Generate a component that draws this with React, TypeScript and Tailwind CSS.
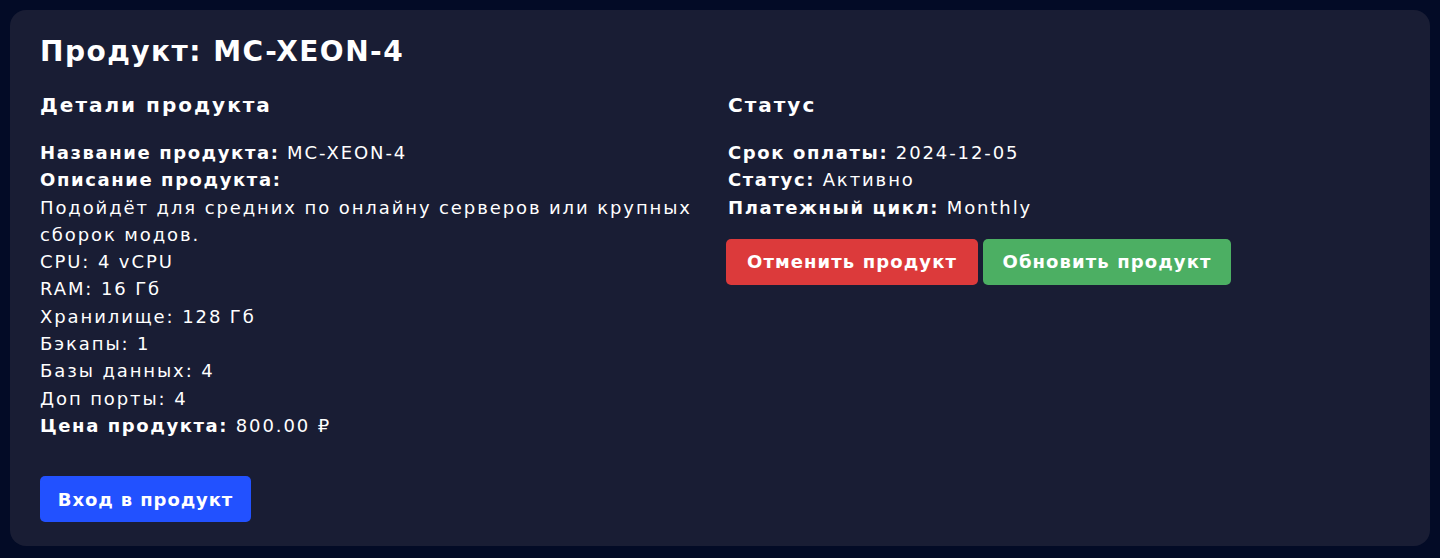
export default function App() {
  const font = { fontFamily: '"DejaVu Sans", "Noto Sans", sans-serif' };
  return (
    <div className="min-h-[558px] bg-[#030b26] p-[10px] text-white" style={font}>
      <div className="rounded-2xl bg-[#191d34] px-[30px] pt-[22px] pb-[24px]">
        <h1 className="text-[28px] font-bold leading-[40px] tracking-[1.5px]">Продукт: MC-XEON-4</h1>
        <div className="mt-[19px] grid grid-cols-2 gap-4">
          <div>
            <h2 className="text-[20px] font-bold leading-[28px] tracking-[2px]">Детали продукта</h2>
            <div className="mt-[20px] text-[18px] leading-[27.3px] tracking-[1.9px]">
              <p><b className="tracking-[1.6px]">Название продукта:</b> MC-XEON-4</p>
              <p><b className="tracking-[1.6px]">Описание продукта:</b></p>
              <p>Подойдёт для средних по онлайну серверов или крупных сборок модов.</p>
              <p>CPU: 4 vCPU</p>
              <p>RAM: 16 Гб</p>
              <p>Хранилище: 128 Гб</p>
              <p>Бэкапы: 1</p>
              <p>Базы данных: 4</p>
              <p>Доп порты: 4</p>
              <p><b className="tracking-[1.6px]">Цена продукта:</b> 800.00 ₽</p>
            </div>
            <button className="mt-[37px] h-[46px] w-[211px] rounded-[5px] bg-[#2251ff] text-[18px] font-bold tracking-[0.9px]">
              Вход в продукт
            </button>
          </div>
          <div>
            <h2 className="text-[20px] font-bold leading-[28px] tracking-[2px]">Статус</h2>
            <div className="mt-[20px] text-[18px] leading-[27.3px] tracking-[1.9px]">
              <p><b className="tracking-[1.6px]">Срок оплаты:</b> 2024-12-05</p>
              <p><b className="tracking-[1.6px]">Статус:</b> Активно</p>
              <p><b className="tracking-[1.6px]">Платежный цикл:</b> Monthly</p>
            </div>
            <div className="mt-[18px] -ml-[2px] flex gap-[5px]">
              <button className="h-[46px] w-[252px] rounded-[5px] bg-[#dc3a3b] text-[18px] font-bold tracking-[1.1px]">
                Отменить продукт
              </button>
              <button className="h-[46px] w-[248px] rounded-[5px] bg-[#4caf63] text-[18px] font-bold tracking-[1.1px]">
                Обновить продукт
              </button>
            </div>
          </div>
        </div>
      </div>
    </div>
  );
}
